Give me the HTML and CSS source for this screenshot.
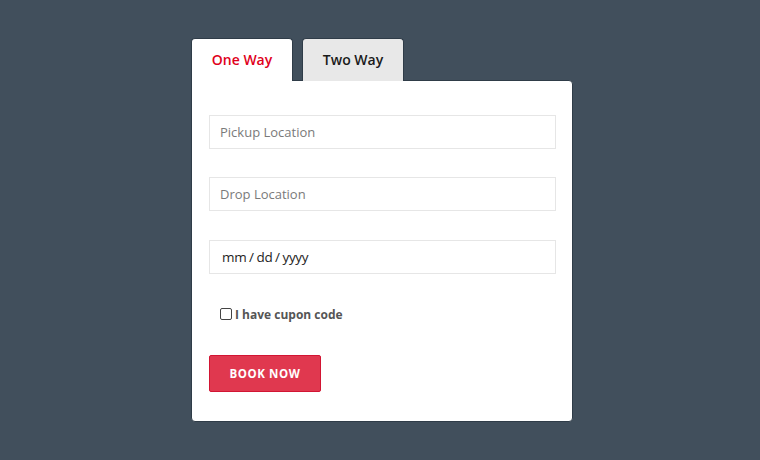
FILE: index.html
```html
<!DOCTYPE html>
<html>
<head>
<meta charset="utf-8">
<link rel="stylesheet" href="styles.css">
</head>
<body>
<div class="wrap">
  <div class="tabs">
    <div class="tab active">One Way</div>
    <div class="tab">Two Way</div>
  </div>
  <div class="card">
    <div class="field"><span class="ph">Pickup Location</span></div>
    <div class="field"><span class="ph">Drop Location</span></div>
    <div class="field date"><span class="val">mm / dd / yyyy</span></div>
    <label class="check"><span class="box"></span>I have cupon code</label>
    <button class="btn">BOOK NOW</button>
  </div>
</div>
</body>
</html>
```
FILE: styles.css
```css
* { box-sizing: border-box; }
html, body { margin: 0; padding: 0; }
body {
  background: #414f5c;
  font-family: "Open Sans", "Liberation Sans", sans-serif;
  width: 760px;
  height: 460px;
  overflow: hidden;
}
.wrap {
  width: 382px;
  margin: 38px 0 0 191px;
}
.tabs {
  display: flex;
  gap: 9px;
}
.tab {
  width: 102px;
  height: 43px;
  border: 1px solid #2f3c48;
  border-bottom: none;
  border-radius: 4px 4px 0 0;
  background: #e8e8e8;
  color: #1a1a1a;
  font-size: 14px;
  font-weight: 600;
  display: flex;
  align-items: center;
  justify-content: center;
  padding-bottom: 2px;
  margin-bottom: -1px;
  position: relative;
}
.tab.active {
  background: #fff;
  color: #e0001b;
  z-index: 1;
}
.card {
  background: #fff;
  border: 1px solid #2f3c48;
  border-radius: 0 4px 4px 4px;
  padding: 34px 16px 29px 17px;
  display: flex;
  flex-direction: column;
  align-items: flex-start;
  height: 342px;
}
.field {
  width: 347px;
  height: 34px;
  border: 1px solid #e6e6e6;
  display: flex;
  align-items: center;
  padding-left: 10px;
  font-size: 13px;
  margin-bottom: 28px;
}
.field + .field { margin-bottom: 29px; }
.field.date { margin-bottom: 0; padding-left: 12px; }
.ph { color: #7a7a7a; }
.val { color: #1e1e1e; font-size: 13.5px; letter-spacing: -0.3px; word-spacing: -0.5px; }
.check {
  display: flex;
  align-items: center;
  margin: 32px 0 0 11px;
  font-size: 12px;
  font-weight: 700;
  color: #555;
  height: 16px;
}
.box {
  width: 12px;
  height: 12px;
  border: 1px solid #444;
  border-radius: 2px;
  margin-right: 3px;
  background: #fff;
}
.btn {
  margin-top: 33px;
  width: 112px;
  height: 37px;
  background: #e0384f;
  border: 1px solid #d21533;
  border-radius: 2px;
  color: #fff;
  font-family: "Open Sans", "Liberation Sans", sans-serif;
  font-weight: 700;
  font-size: 11.5px;
  letter-spacing: 0.6px;
  padding: 0;
}
```
